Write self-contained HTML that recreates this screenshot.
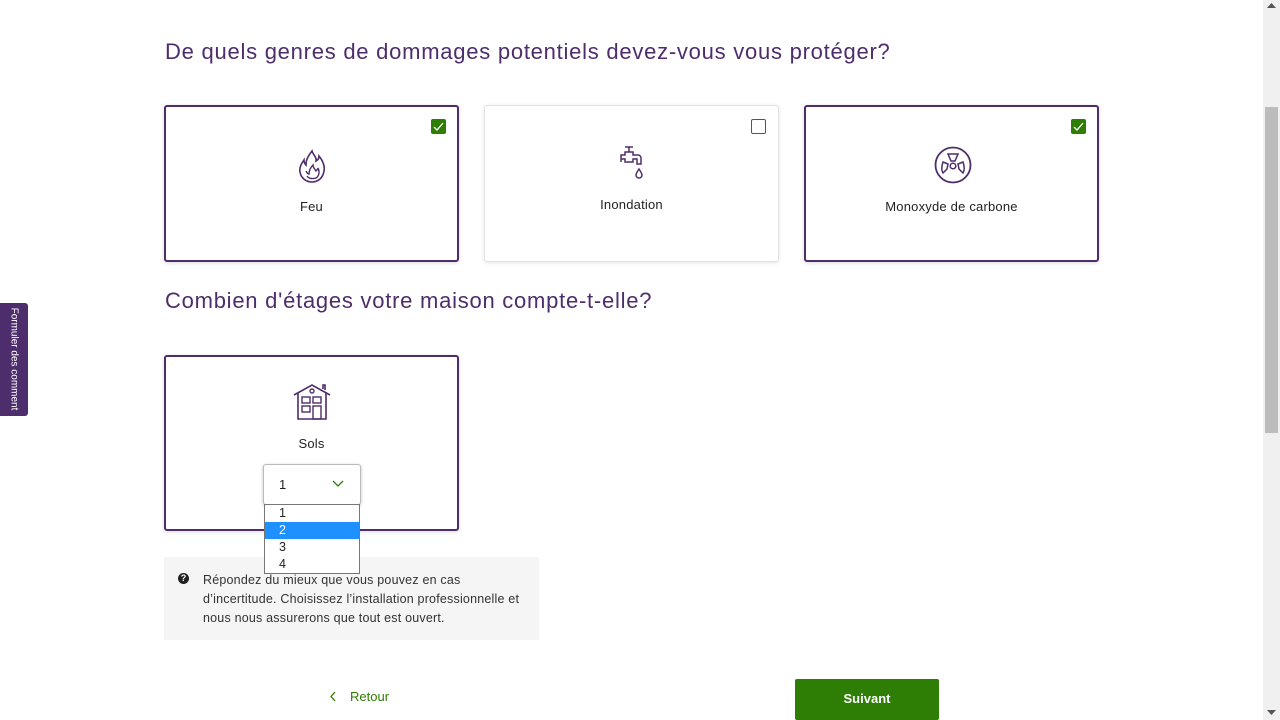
<!DOCTYPE html>
<html><head><meta charset="utf-8"><style>
*{margin:0;padding:0;box-sizing:border-box}
body{width:1280px;height:720px;overflow:hidden;background:#fff;font-family:"Liberation Sans",sans-serif;position:relative;color:#222}
.h{position:absolute;left:165px;font-size:22px;color:#4d2d6b;font-weight:normal;letter-spacing:.75px}
.card{position:absolute;width:295px;height:157px;background:#fff;border-radius:3px}
.sel{border:2px solid #4d2d6b;box-shadow:0 1px 4px rgba(0,0,0,.15)}
.uns{border:1px solid #e2e2e2;box-shadow:0 1px 4px rgba(0,0,0,.1)}
.lab{position:absolute;left:0;right:0;text-align:center;font-size:13px;color:#222;letter-spacing:.2px}
.cb{position:absolute;width:15px;height:15px;border-radius:2px}
.cbon{background:#2e7d04}
.cboff{border:1.5px solid #555;background:#fff}
svg{position:absolute}
</style></head><body>
<div class="h" style="top:39px">De quels genres de dommages potentiels devez-vous vous protéger?</div>

<div class="card sel" style="left:164px;top:105px">
 <div class="cb cbon" style="left:265px;top:12px"><svg width="15" height="15" viewBox="0 0 15 15"><path d="M3 8l3 3 6-7" stroke="#fff" stroke-width="1.3" fill="none"/></svg></div>
 <svg style="left:132px;top:42px" width="28" height="36" viewBox="0 0 28 36"><path d="M14 2c1 4 5 6 4 10 2-1 3-3 3-5 4 5 6 10 5 15-1 7-6 11-12 11S3 29 2 23c-1-5 2-9 4-12 0 3 1 4 2 5 0-6 3-10 6-14z" fill="none" stroke="#4d2d6b" stroke-width="1.6"/><path d="M8 22c1 2 2 3 3 3 0-4 2-7 4-9 0 3 2 4 3 6 1-1 2-2 2-3 2 4 1 8-2 10-3 1-7 1-9-2" fill="none" stroke="#4d2d6b" stroke-width="1.4"/></svg>
 <div class="lab" style="top:92px">Feu</div>
</div>
<div class="card uns" style="left:484px;top:105px">
 <div class="cb cboff" style="left:266px;top:13px"></div>
 <svg style="left:130px;top:38px" width="30" height="38" viewBox="0 0 30 38"><path d="M10 3h8M14 3v5M10 8h8v3h5a3 3 0 0 1 3 3v6h-4v-5h-4v3H10v-3H6V11h4z M6 11v7" fill="none" stroke="#4d2d6b" stroke-width="1.5"/><path d="M24 25c-2 3-3 5-3 6a3 3 0 0 0 6 0c0-1-1-3-3-6z" fill="none" stroke="#4d2d6b" stroke-width="1.5"/></svg>
 <div class="lab" style="top:91px">Inondation</div>
</div>
<div class="card sel" style="left:804px;top:105px">
 <div class="cb cbon" style="left:265px;top:12px"><svg width="15" height="15" viewBox="0 0 15 15"><path d="M3 8l3 3 6-7" stroke="#fff" stroke-width="1.3" fill="none"/></svg></div>
 <svg style="left:128px;top:39px" width="38" height="38" viewBox="0 0 38 38"><circle cx="19" cy="19" r="17.5" fill="none" stroke="#4d2d6b" stroke-width="1.8"/><circle cx="19" cy="20" r="2.8" fill="none" stroke="#4d2d6b" stroke-width="1.5"/><path d="M14 8h10l-3 7h-4z M9 16l5 2 -1 5-4 4c-2-3-1-8 0-11z M29 16l-5 2 1 5 4 4c2-3 1-8 0-11z" fill="none" stroke="#4d2d6b" stroke-width="1.5"/></svg>
 <div class="lab" style="top:92px">Monoxyde de carbone</div>
</div>

<div class="h" style="top:288px">Combien d'étages votre maison compte-t-elle?</div>
<div class="card sel" style="left:164px;top:355px;height:176px">
 <svg style="left:126px;top:24px" width="40" height="40" viewBox="0 0 40 40"><path d="M2 14L20 4l18 10M31 8V4h2v5M6 12v26h28V12" fill="none" stroke="#4d2d6b" stroke-width="1.6"/><circle cx="20" cy="10" r="2" fill="none" stroke="#4d2d6b" stroke-width="1.4"/><rect x="10" y="16" width="8" height="6" fill="none" stroke="#4d2d6b" stroke-width="1.4"/><rect x="21" y="16" width="8" height="6" fill="none" stroke="#4d2d6b" stroke-width="1.4"/><rect x="10" y="25" width="8" height="6" fill="none" stroke="#4d2d6b" stroke-width="1.4"/><rect x="21" y="25" width="8" height="13" fill="none" stroke="#4d2d6b" stroke-width="1.4"/></svg>
 <div class="lab" style="top:79px">Sols</div>
 <div style="position:absolute;left:97px;top:107px;width:98px;height:41px;border:1px solid #bbb;border-radius:3px;box-shadow:0 1px 3px rgba(0,0,0,.25);background:#fff;font-size:13px;padding:12px 0 0 15px">1
  <svg style="left:68px;top:15px" width="12" height="8" viewBox="0 0 12 8"><path d="M1 1l5 5 5-5" stroke="#2e7d04" stroke-width="1.3" fill="none"/></svg></div>
</div>
<div style="position:absolute;left:164px;top:557px;width:375px;height:83px;background:#f5f5f5"></div>
<div style="position:absolute;left:178px;top:573px;width:11px;height:11px;border-radius:50%;background:#222;color:#fff;font-size:9px;font-weight:bold;text-align:center;line-height:11px">?</div>
<div style="position:absolute;left:203px;top:571px;width:322px;font-size:12.5px;line-height:19px;color:#333;letter-spacing:.2px">Répondez du mieux que vous pouvez en cas d’incertitude. Choisissez l’installation professionnelle et nous nous assurerons que tout est ouvert.</div>
<div style="position:absolute;left:264px;top:504px;width:96px;height:70px;border:1px solid #777;background:#fff;font-size:12.5px;color:#222">
 <div style="height:17px;padding-left:14px;line-height:17px">1</div>
 <div style="height:17px;padding-left:14px;line-height:17px;background:#1e90ff;color:#fff">2</div>
 <div style="height:17px;padding-left:14px;line-height:17px">3</div>
 <div style="height:17px;padding-left:14px;line-height:17px">4</div>
</div>

<svg style="left:329px;top:691px" width="8" height="11" viewBox="0 0 8 11"><path d="M6 1L2 5.5 6 10" stroke="#2e7d04" stroke-width="1.3" fill="none"/></svg>
<div style="position:absolute;left:350px;top:689px;font-size:13px;color:#2e7d04">Retour</div>
<div style="position:absolute;left:795px;top:679px;width:144px;height:41px;background:#2e7d04;border-radius:2px;color:#fff;font-weight:bold;font-size:13px;text-align:center;line-height:39px">Suivant</div>

<div style="position:absolute;left:0;top:303px;width:28px;height:113px;background:#4d2d6b;border-radius:0 3px 3px 0"></div>
<div style="position:absolute;left:14px;top:359px;transform:translate(-50%,-50%) rotate(90deg);white-space:nowrap;font-size:10px;color:#fff">Formuler des comment</div>

<div style="position:absolute;left:1263px;top:0;width:17px;height:720px;background:#f0f0f0"></div>
<div style="position:absolute;left:1265px;top:107px;width:13px;height:326px;background:#bcbcbc"></div>
<svg style="left:1267px;top:3px" width="9" height="6"><path d="M0 5h9L4.5 0z" fill="#555"/></svg>
<svg style="left:1267px;top:710px" width="9" height="6"><path d="M0 0h9L4.5 5z" fill="#555"/></svg>
</body></html>
